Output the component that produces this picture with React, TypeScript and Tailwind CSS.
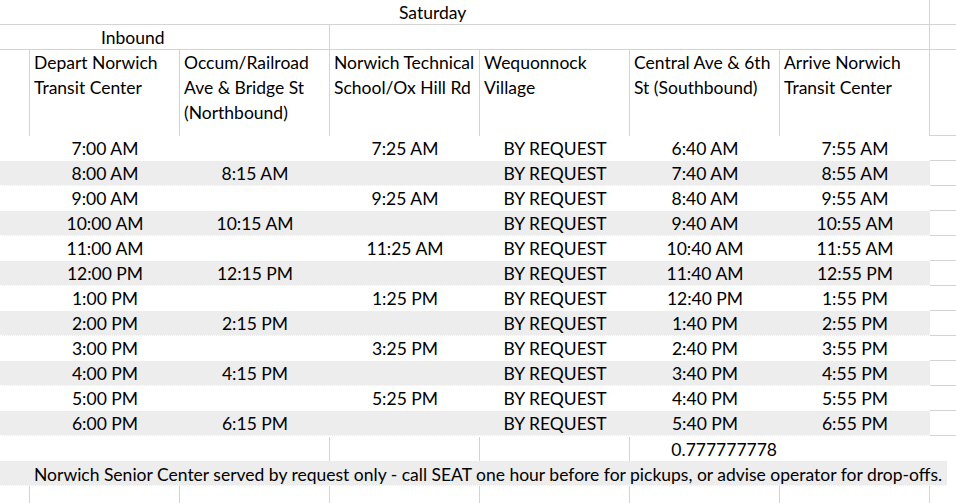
import React from 'react';

const BR = 'BY REQUEST';

const schedule: string[][] = [
  ['7:00 AM', '', '7:25 AM', BR, '6:40 AM', '7:55 AM'],
  ['8:00 AM', '8:15 AM', '', BR, '7:40 AM', '8:55 AM'],
  ['9:00 AM', '', '9:25 AM', BR, '8:40 AM', '9:55 AM'],
  ['10:00 AM', '10:15 AM', '', BR, '9:40 AM', '10:55 AM'],
  ['11:00 AM', '', '11:25 AM', BR, '10:40 AM', '11:55 AM'],
  ['12:00 PM', '12:15 PM', '', BR, '11:40 AM', '12:55 PM'],
  ['1:00 PM', '', '1:25 PM', BR, '12:40 PM', '1:55 PM'],
  ['2:00 PM', '2:15 PM', '', BR, '1:40 PM', '2:55 PM'],
  ['3:00 PM', '', '3:25 PM', BR, '2:40 PM', '3:55 PM'],
  ['4:00 PM', '4:15 PM', '', BR, '3:40 PM', '4:55 PM'],
  ['5:00 PM', '', '5:25 PM', BR, '4:40 PM', '5:55 PM'],
  ['6:00 PM', '6:15 PM', '', BR, '5:40 PM', '6:55 PM'],
];

const headers = [
  'Depart Norwich Transit Center',
  'Occum/Railroad Ave & Bridge St (Northbound)',
  'Norwich Technical School/Ox Hill Rd',
  'Wequonnock Village',
  'Central Ave & 6th St (Southbound)',
  'Arrive Norwich Transit Center',
];

export default function App() {
  return (
    <div
      className="w-[956px] h-[503px] overflow-hidden bg-white text-[17.5px] text-black"
      style={{ fontFamily: 'Lato, "Open Sans", sans-serif' }}
    >
      {/* Title row */}
      <div className="flex h-[25px] border-b border-[#d4d4d4]">
        <div className="w-[930px] border-r border-[#d4d4d4] leading-[23px] pt-px">
          <div className="pl-[399px] whitespace-nowrap">Saturday</div>
        </div>
        <div className="flex-1" />
      </div>

      {/* Direction row */}
      <div className="flex h-[25px] border-b border-[#d4d4d4]">
        <div className="w-[330px] border-r border-[#d4d4d4] leading-[24px] pt-px">
          <div className="pl-[101px]">Inbound</div>
        </div>
        <div className="w-[600px] border-r border-[#d4d4d4]" />
        <div className="flex-1" />
      </div>

      {/* Stop headers */}
      <div className="flex h-[86px]">
        <div className="w-[30px] border-r border-[#d4d4d4]" />
        {headers.map((h) => (
          <div key={h} className="w-[150px] border-r border-[#d4d4d4] pl-[4px] pr-[2px] leading-[25px]">
            {h}
          </div>
        ))}
        <div className="flex-1 border-b border-[#d4d4d4]" />
      </div>

      {/* Trips */}
      {schedule.map((row, i) => {
        const shaded = i % 2 === 1;
        return (
          <div key={i} className="flex h-[25px]">
            <div
              className={`w-[930px] flex leading-[24px] pt-px ${
                shaded ? 'bg-[#ededed] border-b border-dotted border-white' : 'bg-white'
              }`}
            >
              <div className="w-[30px]" />
              {row.map((cell, j) => (
                <div key={j} className="w-[150px] text-center whitespace-nowrap">
                  {cell}
                </div>
              ))}
            </div>
            <div className="flex-1 border-b border-[#d4d4d4]" />
          </div>
        );
      })}

      {/* Stray value row */}
      <div className="flex h-[25px] leading-[25px] pt-px">
        <div className="w-[330px] border-r border-[#d4d4d4]" />
        <div className="w-[150px] border-r border-[#d4d4d4]" />
        <div className="w-[150px] border-r border-[#d4d4d4]" />
        <div className="w-[150px] text-right pr-[3px]">0.777777778</div>
        <div className="flex-1" />
      </div>

      {/* Note row */}
      <div className="flex h-[25px] leading-[25px]">
        <div className="w-[947px] bg-[#ededed] border-b border-dotted border-white pl-[34px] pt-px whitespace-nowrap">
          Norwich Senior Center served by request only - call SEAT one hour before for pickups, or advise operator for drop-offs.
        </div>
        <div className="flex-1" />
      </div>

      {/* Empty grid row */}
      <div className="flex h-[18px]">
        <div className="w-[30px] border-r border-[#d4d4d4]" />
        {headers.map((h) => (
          <div key={h} className="w-[150px] border-r border-[#d4d4d4]" />
        ))}
        <div className="flex-1" />
      </div>
    </div>
  );
}
